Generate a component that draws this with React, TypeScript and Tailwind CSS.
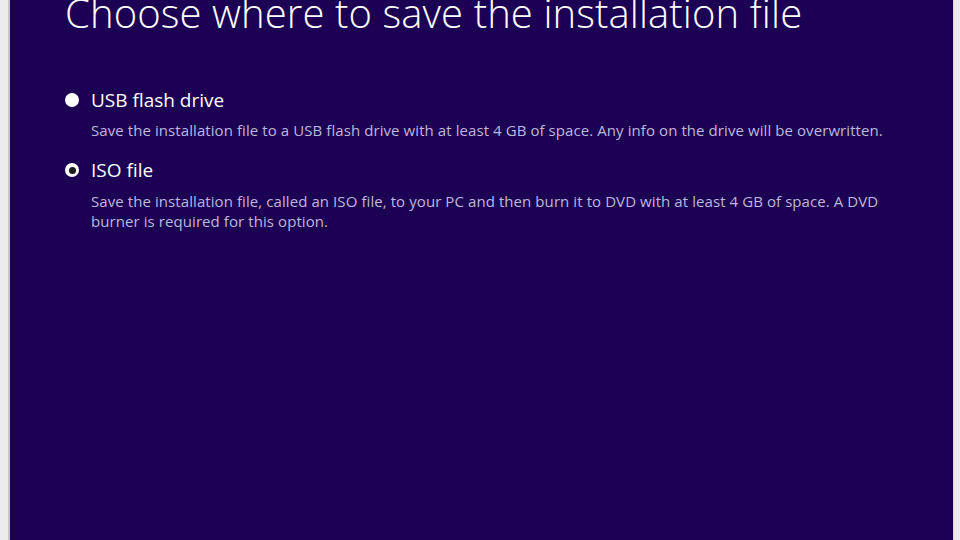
export default function App() {
  const font = { fontFamily: '"Open Sans", "Noto Sans", sans-serif' };
  return (
    <div className="w-[960px] h-[540px] flex bg-[#ececec] overflow-hidden" style={font}>
      <div className="w-[8px] shrink-0" />
      <div className="w-[2px] shrink-0 bg-[#c8c8c8]" />
      <div className="flex-1 bg-[#1b0053] flex flex-col pl-[55px] overflow-hidden">
        <h1 className="text-[40px] font-light text-white leading-none mt-[-7px] tracking-[0.1px] whitespace-nowrap">
          Choose where to save the installation file
        </h1>
        <div className="mt-[55px] flex flex-col">
          <div className="flex items-center gap-[12px]">
            <div className="w-[14px] h-[14px] rounded-full bg-white" />
            <span className="text-[19px] text-white leading-[24px]">USB flash drive</span>
          </div>
          <p className="ml-[26px] mt-[8px] text-[15px] leading-[20px] text-[#bfb8dd] tracking-[0.08px] whitespace-nowrap">
            Save the installation file to a USB flash drive with at least 4 GB of space. Any info on the drive will be overwritten.
          </p>
          <div className="flex items-center gap-[12px] mt-[18px]">
            <div className="w-[14px] h-[14px] rounded-full bg-white flex items-center justify-center">
              <div className="w-[7px] h-[7px] rounded-full bg-[#1b1b1b]" />
            </div>
            <span className="text-[19px] text-white leading-[24px]">ISO file</span>
          </div>
          <p className="ml-[26px] mt-[9px] w-[810px] text-[15px] leading-[20px] text-[#bfb8dd] tracking-[0.08px]">
            Save the installation file, called an ISO file, to your PC and then burn it to DVD with at least 4 GB of space. A DVD burner is required for this option.
          </p>
        </div>
      </div>
      <div className="w-[1px] shrink-0 bg-[#d8d8d8]" />
      <div className="w-[6px] shrink-0" />
    </div>
  );
}
